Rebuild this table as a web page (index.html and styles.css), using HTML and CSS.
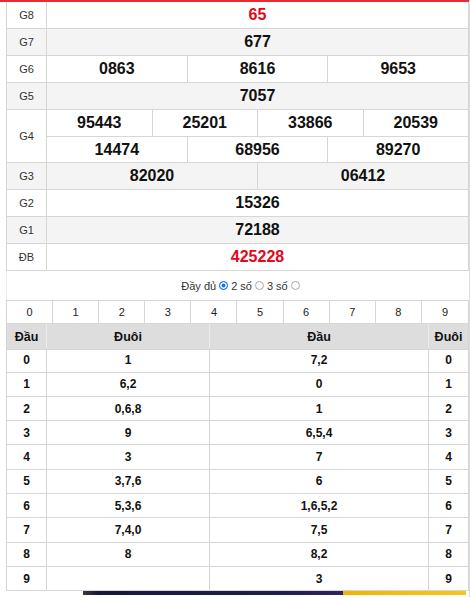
FILE: index.html
```html
<!DOCTYPE html>
<html lang="vi">
<head>
<meta charset="utf-8">
<title>Kết quả xổ số</title>
<link rel="stylesheet" href="styles.css">
</head>
<body>
<div class="page">
  <div class="topline"></div>
  <div class="wrap">
    <div class="prizes">
      <div class="prow">
        <div class="plabel">G8</div>
        <div class="pvals"><div class="pline"><div class="pv red">65</div></div></div>
      </div>
      <div class="prow alt">
        <div class="plabel">G7</div>
        <div class="pvals"><div class="pline"><div class="pv">677</div></div></div>
      </div>
      <div class="prow">
        <div class="plabel">G6</div>
        <div class="pvals"><div class="pline"><div class="pv">0863</div><div class="pv">8616</div><div class="pv">9653</div></div></div>
      </div>
      <div class="prow alt">
        <div class="plabel">G5</div>
        <div class="pvals"><div class="pline"><div class="pv">7057</div></div></div>
      </div>
      <div class="prow">
        <div class="plabel">G4</div>
        <div class="pvals">
          <div class="pline"><div class="pv">95443</div><div class="pv">25201</div><div class="pv">33866</div><div class="pv">20539</div></div>
          <div class="pline"><div class="pv">14474</div><div class="pv">68956</div><div class="pv">89270</div></div>
        </div>
      </div>
      <div class="prow alt">
        <div class="plabel">G3</div>
        <div class="pvals"><div class="pline"><div class="pv">82020</div><div class="pv">06412</div></div></div>
      </div>
      <div class="prow">
        <div class="plabel">G2</div>
        <div class="pvals"><div class="pline"><div class="pv">15326</div></div></div>
      </div>
      <div class="prow alt">
        <div class="plabel">G1</div>
        <div class="pvals"><div class="pline"><div class="pv">72188</div></div></div>
      </div>
      <div class="prow">
        <div class="plabel">ĐB</div>
        <div class="pvals"><div class="pline"><div class="pv red">425228</div></div></div>
      </div>
    </div>

    <div class="options">
      <span>Đầy đủ</span><span class="radio on"></span><span>2 số</span><span class="radio"></span><span>3 số</span><span class="radio"></span>
    </div>

    <div class="digits">
      <div>0</div><div>1</div><div>2</div><div>3</div><div>4</div><div>5</div><div>6</div><div>7</div><div>8</div><div>9</div>
    </div>

    <div class="loto">
      <div class="lh">Đầu</div><div class="lh">Đuôi</div><div class="lh">Đầu</div><div class="lh">Đuôi</div>
      <div class="lc">0</div><div class="lc">1</div><div class="lc">7,2</div><div class="lc">0</div>
      <div class="lc">1</div><div class="lc">6,2</div><div class="lc">0</div><div class="lc">1</div>
      <div class="lc">2</div><div class="lc">0,6,8</div><div class="lc">1</div><div class="lc">2</div>
      <div class="lc">3</div><div class="lc">9</div><div class="lc">6,5,4</div><div class="lc">3</div>
      <div class="lc">4</div><div class="lc">3</div><div class="lc">7</div><div class="lc">4</div>
      <div class="lc">5</div><div class="lc">3,7,6</div><div class="lc">6</div><div class="lc">5</div>
      <div class="lc">6</div><div class="lc">5,3,6</div><div class="lc">1,6,5,2</div><div class="lc">6</div>
      <div class="lc">7</div><div class="lc">7,4,0</div><div class="lc">7,5</div><div class="lc">7</div>
      <div class="lc">8</div><div class="lc">8</div><div class="lc">8,2</div><div class="lc">8</div>
      <div class="lc">9</div><div class="lc"></div><div class="lc">3</div><div class="lc">9</div>
    </div>
  </div>
  <div class="banner"></div>
</div>
</body>
</html>
```

FILE: styles.css
```css
* { box-sizing: border-box; }

body {
  margin: 0;
  background: #fff;
  font-family: "Liberation Sans", Arial, sans-serif;
  color: #111;
}

.page {
  width: 470px;
  height: 597px;
  overflow: hidden;
  border-right: 1px solid #dcdcdc;
}

.topline {
  height: 2px;
  background: #ea2a33;
}

.wrap {
  margin-left: 6px;
  width: 463px;
}

.prizes {
  border-left: 1px solid #d6d6d6;
  border-right: 1px solid #d6d6d6;
}

.prow {
  display: flex;
  border-bottom: 1px solid #d6d6d6;
}

.prow.alt { background: #f4f4f4; }

.plabel {
  width: 40px;
  flex: none;
  border-right: 1px solid #d6d6d6;
  display: flex;
  align-items: center;
  justify-content: center;
  font-size: 11px;
  color: #333;
}

.pvals {
  flex: 1;
  display: flex;
  flex-direction: column;
}

.pline {
  display: flex;
  height: 26px;
}

.pline + .pline { border-top: 1px solid #d6d6d6; }

.pv {
  flex: 1 1 0;
  display: flex;
  align-items: center;
  justify-content: center;
  font-weight: bold;
  font-size: 16px;
  color: #111;
}

.pv + .pv { border-left: 1px solid #d6d6d6; }

.pv.red { color: #e5061b; }

.options {
  height: 29px;
  display: flex;
  align-items: center;
  justify-content: center;
  gap: 2px;
  padding-left: 6px;
  font-size: 11px;
  color: #333;
  border-left: 1px solid #ececec;
}

.radio {
  width: 9px;
  height: 9px;
  border-radius: 50%;
  border: 1px solid #aaa;
  background: #fff;
  margin: 0 1px;
}

.radio.on {
  border-color: #1a73e8;
  background: #1a73e8;
  box-shadow: inset 0 0 0 1.5px #fff;
}

.digits {
  display: grid;
  grid-template-columns: repeat(10, 1fr);
  height: 24px;
  border: 1px solid #d6d6d6;
}

.digits div {
  border-right: 1px solid #d6d6d6;
  display: flex;
  align-items: center;
  justify-content: center;
  font-size: 11px;
  color: #222;
}

.digits div:last-child { border-right: none; }

.loto {
  display: grid;
  grid-template-columns: 40px 163px 219px 1fr;
  grid-auto-rows: 24.3px;
  border-left: 1px solid #d6d6d6;
  border-right: 1px solid #d6d6d6;
}

.lh, .lc {
  display: flex;
  align-items: center;
  justify-content: center;
  font-weight: bold;
  font-size: 12px;
  color: #111;
  border-bottom: 1px solid #d6d6d6;
  border-right: 1px solid #d6d6d6;
}

.lh {
  height: 26px;
  background: #dddddd;
  border-right-color: #ececec;
  font-size: 12.5px;
}

.lh:nth-child(4n), .lc:nth-child(4n) { border-right: none; }

.banner {
  margin-left: 83px;
  width: 383px;
  height: 4px;
  background: linear-gradient(90deg, #3a3a3a 0, #15183a 4%, #1d1f4a 50%, #2d2460 67.8%, #f1b400 67.9%, #f8c51c 100%);
}
```
